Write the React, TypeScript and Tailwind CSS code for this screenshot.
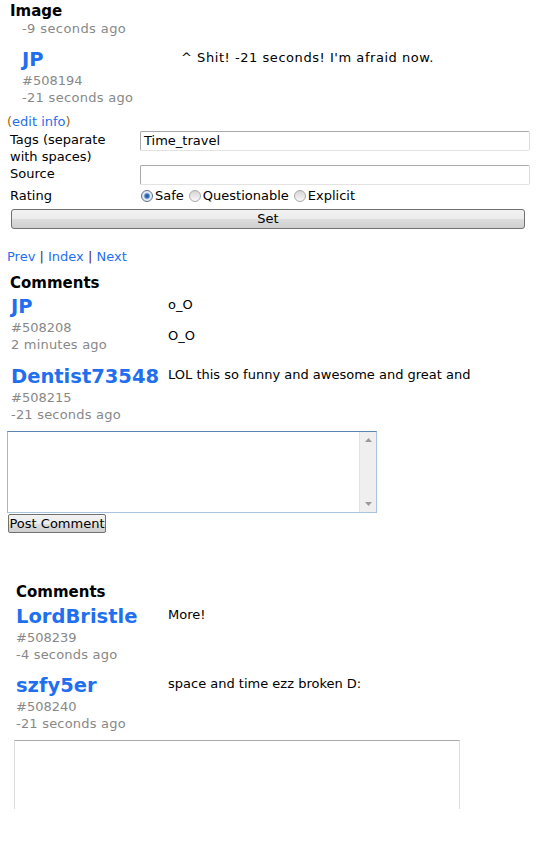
import React from "react";

const font = "font-['DejaVu_Sans',Verdana,sans-serif]";

type Comment = { user: string; id: string; ago: string; text: string[] };

const first: Comment[] = [
  { user: "JP", id: "#508208", ago: "2 minutes ago", text: ["o_O", "O_O"] },
  { user: "Dentist73548", id: "#508215", ago: "-21 seconds ago", text: ["LOL this so funny and awesome and great and"] },
];

const second: Comment[] = [
  { user: "LordBristle", id: "#508239", ago: "-4 seconds ago", text: ["More!"] },
  { user: "szfy5er", id: "#508240", ago: "-21 seconds ago", text: ["space and time ezz broken D:"] },
];

// name + post id + age on the left, comment text on the right
const CommentRow = ({ c, nameWidth }: { c: Comment; nameWidth: string }) => (
  <div className="flex">
    <div className={`${nameWidth} shrink-0`}>
      <div className="text-[19.5px] font-bold leading-[24px] text-[#1f6fef]">{c.user}</div>
      <div className="text-[13px] leading-[17px] text-[#888]">{c.id}</div>
      <div className="text-[13px] leading-[17px] text-[#888] tracking-[0.2px]">{c.ago}</div>
    </div>
    <div className="flex flex-col gap-[14px] pt-[1px] text-[13px] leading-[17px] text-black">
      {c.text.map((t) => (
        <div key={t}>{t}</div>
      ))}
    </div>
  </div>
);

const Radio = ({ checked, label }: { checked?: boolean; label: string }) => (
  <span className="flex items-center">
    <span
      className={
        checked
          ? "w-[12px] h-[12px] rounded-full border border-[#5d6f82] bg-[radial-gradient(circle,#1e4f8f_0,#3a78c0_2px,#dbe6f2_3.5px,#f5f5f5_6px)] mr-[2px]"
          : "w-[12px] h-[12px] rounded-full border border-[#a8a8a8] bg-[linear-gradient(#d6d6d6,#f8f8f8)] mr-[2px]"
      }
    />
    {label}
  </span>
);

const btn =
  "block border border-[#707070] bg-[linear-gradient(#f2f2f2,#ebebeb_50%,#dddddd_51%,#cfcfcf)] text-[13px] text-black whitespace-nowrap";

export default function App() {
  return (
    <div className={`${font} bg-white w-[547px] h-[857px] overflow-hidden text-black`}>
      <div className="pl-[10px] pt-[3px]">
        <h2 className="text-[15px] font-bold leading-[17px]">Image</h2>
        <div className="pl-[12px] text-[13px] leading-[17px] text-[#888] tracking-[0.4px]">-9 seconds ago</div>
        <div className="flex pl-[12px] mt-[11px]">
          <div className="w-[159px] shrink-0">
            <div className="text-[19.5px] font-bold leading-[24px] text-[#1f6fef]">JP</div>
            <div className="text-[13px] leading-[17px] text-[#888]">#508194</div>
            <div className="text-[13px] leading-[17px] text-[#888] tracking-[0.3px]">-21 seconds ago</div>
          </div>
          <div className="pt-[1px] text-[13px] leading-[17px] tracking-[0.55px]">^ Shit! -21 seconds! I'm afraid now.</div>
        </div>
      </div>

      <div className="pl-[7px] pt-[7px] text-[13px] leading-[17px]">
        <span className="text-[#a8620a]">(</span>
        <span className="text-[#1f6fef]">edit info</span>
        <span className="text-[#a8620a]">)</span>
      </div>

      <div className="pl-[10px] pr-[17px] pt-[1px] text-[13px] leading-[17px]">
        <div className="grid grid-cols-[130px_1fr] items-start">
          <div className="w-[112px]">Tags (separate with spaces)</div>
          <div className="h-[20px] border border-[#a9a9a9] border-b-[#e3e3e3] border-r-[#dcdcdc] rounded-[2px] px-[3px] leading-[18px]">
            Time_travel
          </div>
          <div>Source</div>
          <div className="h-[20px] border border-[#a9a9a9] border-b-[#e3e3e3] border-r-[#dcdcdc] rounded-[2px]" />
          <div className="pt-[2px]">Rating</div>
          <div className="flex gap-[5px] pt-[2px] pl-[1px]">
            <Radio checked label="Safe" />
            <Radio label="Questionable" />
            <Radio label="Explicit" />
          </div>
        </div>
        <button className={`${btn} mt-[5px] ml-[1px] w-[514px] h-[20px] rounded-[3px] leading-[18px]`}>Set</button>
      </div>

      <div className="pl-[7px] mt-[19px] text-[13px] leading-[17px] text-[#1f6fef]">
        Prev <span className="text-[#5a1a3a]">|</span> Index <span className="text-[#5a1a3a]">|</span> Next
      </div>

      <h2 className="pl-[10px] mt-[10px] text-[15px] font-bold leading-[17px]">Comments</h2>
      <div className="pl-[11px] mt-[3px] flex flex-col gap-[12px]">
        {first.map((c) => (
          <CommentRow key={c.id} c={c} nameWidth="w-[157px]" />
        ))}
      </div>

      <div className="pl-[7px] mt-[8px]">
        <div className="flex w-[370px] h-[82px] border border-[#a8c4de] border-t-[#5a86b3] border-l-[#9ab8d6]">
          <div className="flex-1" />
          <div className="w-[17px] bg-[#efefef] border-l border-[#e2e2e2] flex flex-col justify-between items-center py-[6px]">
            <svg width="7" height="4" viewBox="0 0 7 4">
              <path d="M0 4 L3.5 0 L7 4 Z" fill="#9a9a9a" />
            </svg>
            <svg width="7" height="4" viewBox="0 0 7 4">
              <path d="M0 0 L3.5 4 L7 0 Z" fill="#9a9a9a" />
            </svg>
          </div>
        </div>
        <button className={`${btn} mt-[1px] ml-[1px] h-[19px] w-[98px] px-0 rounded-[2px] leading-[16px]`}>
          Post Comment
        </button>
      </div>

      <div className="pl-[16px] mt-[51px]">
        <h2 className="text-[15px] font-bold leading-[17px]">Comments</h2>
        <div className="mt-[4px] flex flex-col gap-[11px]">
          {second.map((c) => (
            <CommentRow key={c.id} c={c} nameWidth="w-[152px]" />
          ))}
        </div>
      </div>

      {/* page is cut off here, textarea continues below */}
      <div className="pl-[14px] mt-[8px]">
        <div className="w-[446px] h-[69px] border border-b-0 border-[#dcdcdc] border-t-[#a9a9a9]" />
      </div>
    </div>
  );
}
